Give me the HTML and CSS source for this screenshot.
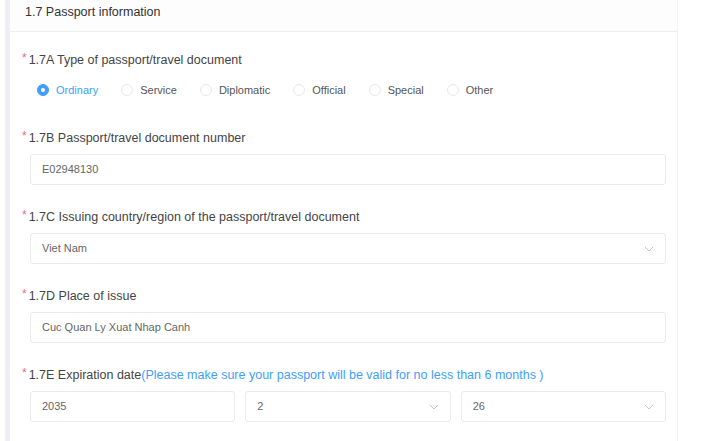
FILE: index.html
```html
<!DOCTYPE html>
<html>
<head>
<meta charset="utf-8">
<link rel="stylesheet" href="styles.css">
</head>
<body>
<div class="page">
  <div class="card">
    <div class="card-header">1.7 Passport information</div>
    <div class="card-body">
      <div class="item item-radio">
        <div class="label"><span class="req">*</span>1.7A Type of passport/travel document</div>
        <div class="radios">
          <label class="radio checked"><span class="dot"></span><span class="rtext">Ordinary</span></label>
          <label class="radio"><span class="dot"></span><span class="rtext">Service</span></label>
          <label class="radio"><span class="dot"></span><span class="rtext">Diplomatic</span></label>
          <label class="radio"><span class="dot"></span><span class="rtext">Official</span></label>
          <label class="radio"><span class="dot"></span><span class="rtext">Special</span></label>
          <label class="radio"><span class="dot"></span><span class="rtext">Other</span></label>
        </div>
      </div>
      <div class="item">
        <div class="label"><span class="req">*</span>1.7B Passport/travel document number</div>
        <div class="controls"><div class="input">E02948130</div></div>
      </div>
      <div class="item">
        <div class="label"><span class="req">*</span>1.7C Issuing country/region of the passport/travel document</div>
        <div class="controls"><div class="input select">Viet Nam<svg class="chev" viewBox="0 0 10 6" width="10" height="6"><path d="M1 1 L5 5 L9 1" fill="none" stroke="#c0c4cc" stroke-width="1"/></svg></div></div>
      </div>
      <div class="item">
        <div class="label"><span class="req">*</span>1.7D Place of issue</div>
        <div class="controls"><div class="input">Cuc Quan Ly Xuat Nhap Canh</div></div>
      </div>
      <div class="item last">
        <div class="label"><span class="req">*</span>1.7E Expiration date<span class="hint">(Please make sure your passport will be valid for no less than 6 months )</span></div>
        <div class="controls triple">
          <div class="input">2035</div>
          <div class="input select">2<svg class="chev" viewBox="0 0 10 6" width="10" height="6"><path d="M1 1 L5 5 L9 1" fill="none" stroke="#c0c4cc" stroke-width="1"/></svg></div>
          <div class="input select">26<svg class="chev" viewBox="0 0 10 6" width="10" height="6"><path d="M1 1 L5 5 L9 1" fill="none" stroke="#c0c4cc" stroke-width="1"/></svg></div>
        </div>
      </div>
    </div>
  </div>
</div>
</body>
</html>
```
FILE: styles.css
```css
html, body {
  margin: 0;
  padding: 0;
  background: #ffffff;
  font-family: "Liberation Sans", Arial, sans-serif;
}
.page {
  padding-left: 5px;
  width: 673px;
}
.card {
  border-left: 5px solid #eef0f4;
  border-right: 1px solid #f3f4f6;
  background: #fff;
}
.card-header {
  height: 32px;
  line-height: 24px;
  box-sizing: border-box;
  padding-left: 15px;
  font-size: 12.5px;
  color: #333;
  background: #fdfdfd;
  border-bottom: 1px solid #eeeeee;
}
.card-body {
  padding: 18px 11px 20px 12px;
}
.item {
  margin-bottom: 22px;
}
.item.last {
  margin-bottom: 0;
}
.item-radio {
  margin-bottom: 28px;
}
.label {
  height: 20px;
  line-height: 20px;
  font-size: 12.5px;
  color: #444;
  white-space: nowrap;
}
.req {
  color: #f56c6c;
  font-size: 12px;
  margin-right: 2px;
  vertical-align: top;
  position: relative;
  top: -2px;
}
.hint {
  color: #409eff;
}
.radios {
  display: flex;
  gap: 23px;
  margin-top: 10px;
  padding-left: 15px;
  height: 20px;
  align-items: center;
}
.radio {
  display: flex;
  align-items: center;
  font-size: 11px;
  color: #555;
}
.dot {
  width: 10px;
  height: 10px;
  border: 1px solid #e6e8ec;
  border-radius: 50%;
  box-sizing: content-box;
  margin-right: 7px;
  background: #fff;
  position: relative;
}
.radio.checked .dot {
  background: #409eff;
  border-color: #409eff;
}
.radio.checked .dot::after {
  content: "";
  position: absolute;
  left: 3px;
  top: 3px;
  width: 4px;
  height: 4px;
  border-radius: 50%;
  background: #fff;
}
.radio.checked .rtext {
  color: #409eff;
}
.controls {
  margin-top: 6px;
  padding-left: 8px;
}
.input {
  height: 31px;
  box-sizing: border-box;
  border: 1px solid #e8eaee;
  border-radius: 3px;
  padding: 0 11px;
  line-height: 29px;
  font-size: 11px;
  color: #666;
  background: #fff;
  display: flex;
  align-items: center;
  justify-content: space-between;
}
.chev {
  display: block;
}
.triple {
  display: grid;
  grid-template-columns: 1fr 1fr 1fr;
  gap: 10px;
}
```
